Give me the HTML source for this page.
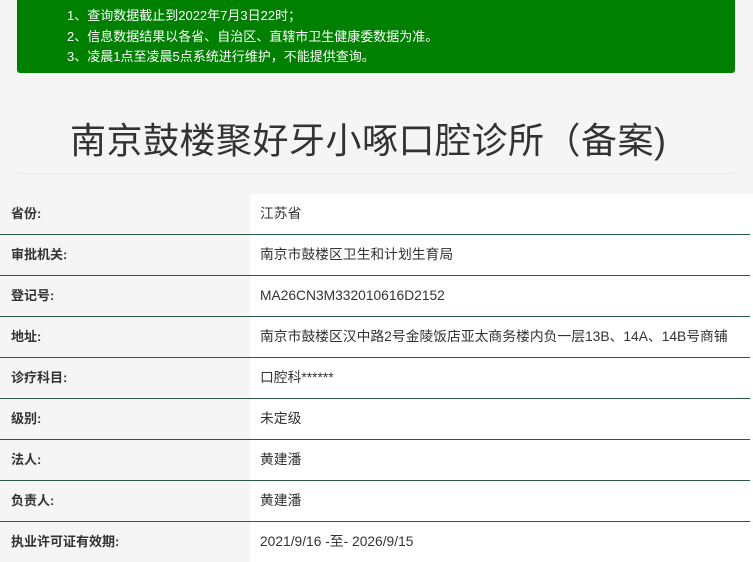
<!DOCTYPE html>
<html><head><meta charset="utf-8"><style>
body{margin:0;width:753px;height:560px;overflow:hidden;background:#f5f5f5;font-family:"Liberation Sans","Noto Sans CJK SC",sans-serif;position:relative}
.g{position:absolute;left:17px;top:0;width:718px;height:73px;background:#008000;border-radius:0 0 3px 3px;color:#fff;font-size:13px}
.g div{position:absolute;left:50px;white-space:nowrap}
h1{position:absolute;left:70px;top:112px;margin:0;font-weight:normal;font-size:36px;color:#333;white-space:nowrap;letter-spacing:0.5px}
.hr{position:absolute;left:17px;top:173px;width:718px;height:1px;background:#e8e8e8}
.t{position:absolute;left:0;top:194px;width:753px}
.r{height:40px;border-bottom:1.5px solid #2a5a44;position:relative;width:750px}
.r:last-child{border-bottom:none}
.l{position:absolute;left:0;top:0;width:250px;height:100%;background:#f5f5f5;font-weight:bold;font-size:13px;color:#333;line-height:40px;padding-left:11px;box-sizing:border-box}
.v{position:absolute;left:250px;top:0;width:503px;height:100%;background:#fff;font-size:13.8px;color:#333;line-height:40px;padding-left:10px;box-sizing:border-box;white-space:nowrap}
</style></head><body>
<div class="g">
<div style="top:5px">1、查询数据截止到2022年7月3日22时；</div>
<div style="top:26px">2、信息数据结果以各省、自治区、直辖市卫生健康委数据为准。</div>
<div style="top:46px">3、凌晨1点至凌晨5点系统进行维护，不能提供查询。</div>
</div>
<h1>南京鼓楼聚好牙小啄口腔诊所（备案)</h1>
<div class="hr"></div>
<div class="t">
<div class="r"><div class="l">省份:</div><div class="v">江苏省</div></div>
<div class="r"><div class="l">审批机关:</div><div class="v">南京市鼓楼区卫生和计划生育局</div></div>
<div class="r"><div class="l">登记号:</div><div class="v">MA26CN3M332010616D2152</div></div>
<div class="r"><div class="l">地址:</div><div class="v">南京市鼓楼区汉中路2号金陵饭店亚太商务楼内负一层13B、14A、14B号商铺</div></div>
<div class="r"><div class="l">诊疗科目:</div><div class="v">口腔科******</div></div>
<div class="r"><div class="l">级别:</div><div class="v">未定级</div></div>
<div class="r"><div class="l">法人:</div><div class="v">黄建潘</div></div>
<div class="r"><div class="l">负责人:</div><div class="v">黄建潘</div></div>
<div class="r"><div class="l">执业许可证有效期:</div><div class="v">2021/9/16 -至- 2026/9/15</div></div>
</div>
</body></html>
